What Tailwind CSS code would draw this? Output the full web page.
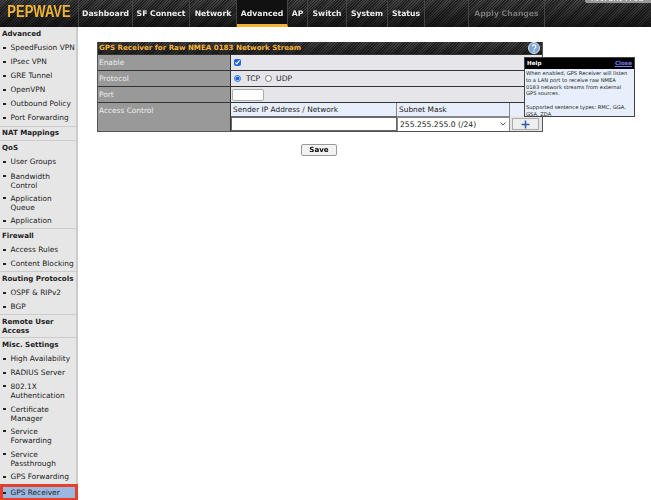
<!DOCTYPE html>
<html lang="en">
<head>
<meta charset="UTF-8">
<title>GPS Receiver</title>
<script src="https://cdn.jsdelivr.net/npm/@tailwindcss/browser@4"></script>
</head>
<body class="h-[500px] w-[651px] overflow-hidden bg-white font-['DejaVu_Sans',sans-serif] text-[7.4px] text-[#222]">
  <div class="blur-[0.3px]">
    <!-- top bar -->
    <header class="relative flex h-[27px] items-stretch overflow-hidden bg-[linear-gradient(#0000,#0009),repeating-linear-gradient(135deg,#444_0,#444_1px,#222_1px,#222_2px)]">
        <div class="flex w-[78px] items-center justify-center pb-[4px] font-['Liberation_Sans',sans-serif] text-[13px] font-bold text-[#f0b432]"><span class="inline-block scale-y-[1.2]">PEPWAVE</span></div>
        <nav class="flex text-[7.7px] font-bold text-[#eee]">
            <a class="flex w-[55px] items-center justify-center border-r border-l border-[#444]">Dashboard</a>
            <a class="flex w-[57px] items-center justify-center border-r border-[#444]">SF Connect</a>
            <a class="flex w-[47px] items-center justify-center border-r border-[#444]">Network</a>
            <a class="flex w-[51px] items-center justify-center border-r border-b-[3px] border-[#444] border-b-[#f0b432] bg-[#111] pt-[3px]">Advanced</a>
            <a class="flex w-[20px] items-center justify-center border-r border-[#444]">AP</a>
            <a class="flex w-[39px] items-center justify-center border-r border-[#444]">Switch</a>
            <a class="flex w-[41px] items-center justify-center border-r border-[#444]">System</a>
            <a class="flex w-[37px] items-center justify-center border-r border-[#444]">Status</a>
        </nav>
        <div class="ml-[43px] flex w-[77px] items-center justify-center border-r border-l border-[#444] text-[7.7px] font-bold text-[#777]">Apply Changes</div>
        <div class="absolute top-[-5px] left-[585px] h-[8px] w-[66px] overflow-hidden rounded-bl-[2px] bg-[#999] pl-[6px] text-[7px] leading-[8px] whitespace-nowrap text-white">MAX-BR1-M-5G-</div>
    </header>

    <div class="flex">
        <!-- sidebar -->
        <aside class="h-[473px] w-[78px] shrink-0 border-r-2 border-[#ccc] bg-[#e6e6e6] whitespace-nowrap">
            <div class="flex h-[14px] items-center pl-[2px] text-[7.1px] font-bold">Advanced</div>
            <ul class="border-b border-[#ccc] pb-[1px]">
                <li class="flex h-[14px] items-center gap-[4.5px] pl-[3px]"><i class="h-[2px] w-[3px] bg-[#222]"></i>SpeedFusion VPN</li>
                <li class="flex h-[14px] items-center gap-[4.5px] pl-[3px]"><i class="h-[2px] w-[3px] bg-[#222]"></i>IPsec VPN</li>
                <li class="flex h-[14px] items-center gap-[4.5px] pl-[3px]"><i class="h-[2px] w-[3px] bg-[#222]"></i>GRE Tunnel</li>
                <li class="flex h-[14px] items-center gap-[4.5px] pl-[3px]"><i class="h-[2px] w-[3px] bg-[#222]"></i>OpenVPN</li>
                <li class="flex h-[14px] items-center gap-[4.5px] pl-[3px]"><i class="h-[2px] w-[3px] bg-[#222]"></i>Outbound Policy</li>
                <li class="flex h-[14px] items-center gap-[4.5px] pl-[3px]"><i class="h-[2px] w-[3px] bg-[#222]"></i>Port Forwarding</li>
            </ul>
            <div class="flex h-[14px] items-center border-b border-[#ccc] pl-[2px] text-[7.1px] font-bold">NAT Mappings</div>
            <div class="flex h-[14px] items-center pl-[2px] text-[7.1px] font-bold">QoS</div>
            <ul class="border-b border-[#ccc]">
                <li class="flex h-[14px] items-center gap-[4.5px] pl-[3px]"><i class="h-[2px] w-[3px] bg-[#222]"></i>User Groups</li>
                <li class="flex h-[22.5px] items-start gap-[4.5px] pt-[2.5px] pl-[3px] leading-[9px]"><i class="mt-[3px] h-[2px] w-[3px] shrink-0 bg-[#222]"></i><span>Bandwidth<br>Control</span></li>
                <li class="flex h-[22.5px] items-start gap-[4.5px] pt-[2.5px] pl-[3px] leading-[9px]"><i class="mt-[3px] h-[2px] w-[3px] shrink-0 bg-[#222]"></i><span>Application<br>Queue</span></li>
                <li class="flex h-[14px] items-center gap-[4.5px] pl-[3px]"><i class="h-[2px] w-[3px] bg-[#222]"></i>Application</li>
            </ul>
            <div class="flex h-[14px] items-center pl-[2px] text-[7.1px] font-bold">Firewall</div>
            <ul class="border-b border-[#ccc]">
                <li class="flex h-[14px] items-center gap-[4.5px] pl-[3px]"><i class="h-[2px] w-[3px] bg-[#222]"></i>Access Rules</li>
                <li class="flex h-[14px] items-center gap-[4.5px] pl-[3px]"><i class="h-[2px] w-[3px] bg-[#222]"></i>Content Blocking</li>
            </ul>
            <div class="flex h-[14px] items-center pl-[2px] text-[7.1px] font-bold">Routing Protocols</div>
            <ul class="border-b border-[#ccc]">
                <li class="flex h-[14px] items-center gap-[4.5px] pl-[3px]"><i class="h-[2px] w-[3px] bg-[#222]"></i>OSPF &amp; RIPv2</li>
                <li class="flex h-[14px] items-center gap-[4.5px] pl-[3px]"><i class="h-[2px] w-[3px] bg-[#222]"></i>BGP</li>
            </ul>
            <div class="h-[23px] border-b border-[#ccc] pt-[1.5px] pl-[2px] text-[7.1px] leading-[9px] font-bold">Remote User<br>Access</div>
            <div class="flex h-[14px] items-center pl-[2px] text-[7.1px] font-bold">Misc. Settings</div>
            <ul>
                <li class="flex h-[14px] items-center gap-[4.5px] pl-[3px]"><i class="h-[2px] w-[3px] bg-[#222]"></i>High Availability</li>
                <li class="flex h-[14px] items-center gap-[4.5px] pl-[3px]"><i class="h-[2px] w-[3px] bg-[#222]"></i>RADIUS Server</li>
                <li class="flex h-[22.5px] items-start gap-[4.5px] pt-[2px] pl-[3px] leading-[9px]"><i class="mt-[3px] h-[2px] w-[3px] shrink-0 bg-[#222]"></i><span>802.1X<br>Authentication</span></li>
                <li class="flex h-[22.5px] items-start gap-[4.5px] pt-[2px] pl-[3px] leading-[9px]"><i class="mt-[3px] h-[2px] w-[3px] shrink-0 bg-[#222]"></i><span>Certificate<br>Manager</span></li>
                <li class="flex h-[22.5px] items-start gap-[4.5px] pt-[2px] pl-[3px] leading-[9px]"><i class="mt-[3px] h-[2px] w-[3px] shrink-0 bg-[#222]"></i><span>Service<br>Forwarding</span></li>
                <li class="flex h-[22.5px] items-start gap-[4.5px] pt-[2px] pl-[3px] leading-[9px]"><i class="mt-[3px] h-[2px] w-[3px] shrink-0 bg-[#222]"></i><span>Service<br>Passthrough</span></li>
                <li class="flex h-[14px] items-center gap-[4.5px] pl-[3px]"><i class="h-[2px] w-[3px] bg-[#222]"></i>GPS Forwarding</li>
                <li class="flex h-[17px] w-[78px] items-center gap-[4.5px] border-[3px] border-[#e5402a] bg-[#9db8e0]"><i class="h-[2px] w-[3px] bg-[#222]"></i>GPS Receiver</li>
            </ul>
        </aside>

        <!-- main -->
        <main class="relative flex-1 pt-[15px] pl-[19px]">
            <section class="w-[446px] border-x border-b border-[#555] bg-[#555]">
                <div class="flex h-[12px] items-center justify-between bg-[linear-gradient(#0000,#0006),repeating-linear-gradient(135deg,#444_0,#444_1px,#222_1px,#222_2px)] pr-[2px] pl-[1px] text-[7.1px] font-bold text-[#f5b335]">
                    <span>GPS Receiver for Raw NMEA 0183 Network Stream</span>
                    <svg width="12" height="12" viewBox="0 0 12 12"><circle cx="6" cy="6" r="5.500" fill="#7fa5d6" stroke="#dfe8f5"/><path d="M4.300 4.600a1.800 1.800 0 1 1 2.600 1.600c-.6.300-.9.600-.9 1.200" fill="none" stroke="#fff" stroke-width="1.200"/><circle cx="6" cy="9" r=".8" fill="#fff"/></svg>
                </div>
                <div class="grid grid-cols-[132px_1fr] gap-[1px] bg-[#333] pt-[1px]">
                    <div class="flex h-[15px] items-center bg-[#999] pl-[1px] text-[#eee]">Enable</div>
                    <div class="flex h-[15px] items-center bg-[#e6e6ea] pl-[3px]">
                        <input type="checkbox" checked class="size-[7px] accent-[#1f66d6]">
                    </div>
                    <div class="flex h-[15px] items-center bg-[#999] pl-[1px] text-[#eee]">Protocol</div>
                    <div class="flex h-[15px] items-center gap-[5px] bg-[#e6e6ea] pl-[3px] text-[7.6px]">
                        <input type="radio" checked name="proto" class="size-[7px] accent-[#1f66d6]"><span>TCP</span>
                        <input type="radio" name="proto" class="size-[7px]"><span class="-ml-[1px]">UDP</span>
                    </div>
                    <div class="flex h-[15px] items-center bg-[#999] pl-[1px] text-[#eee]">Port</div>
                    <div class="flex h-[15px] items-center bg-[#e6e6ea] pl-[1px]">
                        <input type="text" class="h-[12px] w-[32px] rounded-[2px] border border-[#aaa] bg-white">
                    </div>
                    <div class="h-[28px] bg-[#999] pt-[2px] pl-[1px] text-[#eee]">Access Control</div>
                    <div class="grid h-[28px] grid-cols-[166px_113px_1fr] grid-rows-[13px_15px] bg-[#e6e6ea]">
                        <div class="flex items-center border-r border-[#888] bg-[#e8effc] pl-[2px]">Sender IP Address / Network</div>
                        <div class="flex items-center border-r border-[#888] bg-[#e8effc] pl-[2px]">Subnet Mask</div>
                        <div class="bg-[#e8effc]"></div>
                        <input type="text" class="h-[15px] border border-t-2 border-[#666] bg-white">
                        <div class="relative flex h-[15px] items-center border-x border-t-2 border-[#888] bg-white pl-[2px] text-[7.6px]">255.255.255.0 (/24)
                            <svg class="absolute top-[4px] right-[3px]" width="6" height="4" viewBox="0 0 6 4"><path d="M.5.5 3 3 5.500.5" fill="none" stroke="#555"/></svg>
                        </div>
                        <div class="mt-[2px] ml-[2px] flex h-[12px] w-[27px] items-center justify-center border border-[#aaa] bg-[#eee]">
                            <svg width="9" height="9" viewBox="0 0 9 9"><path d="M4.500.5v8M.5 4.500h8" stroke="#2f5fa8" stroke-width="1.500"/></svg>
                        </div>
                    </div>
                </div>
            </section>
            <div class="mt-[12px] ml-[204px] flex h-[12px] w-[36px] items-center justify-center rounded-[2px] border border-[#999] bg-[#f2f2f2] text-[7.1px] font-bold text-black">Save</div>

            <!-- help popup -->
            <div class="absolute top-[30px] left-[446px] h-[60px] w-[111px] border border-[#444] bg-[#e8effc] text-[5.2px] leading-[6.8px]">
                <div class="flex h-[11px] items-center justify-between bg-black px-[2px] text-[5.6px] font-bold text-white">
                    <span>Help</span><a class="text-[#7b7bf0] underline">Close</a>
                </div>
                <p class="px-[1px] pt-[1px] text-[#222]">When enabled, GPS Receiver will listen<br>to a LAN port to receive raw NMEA<br>0183 network streams from external<br>GPS sources.<br><br>Supported sentence types: RMC, GGA,<br>GSA, ZDA</p>
            </div>
        </main>
    </div>
  </div>
</body>
</html>
